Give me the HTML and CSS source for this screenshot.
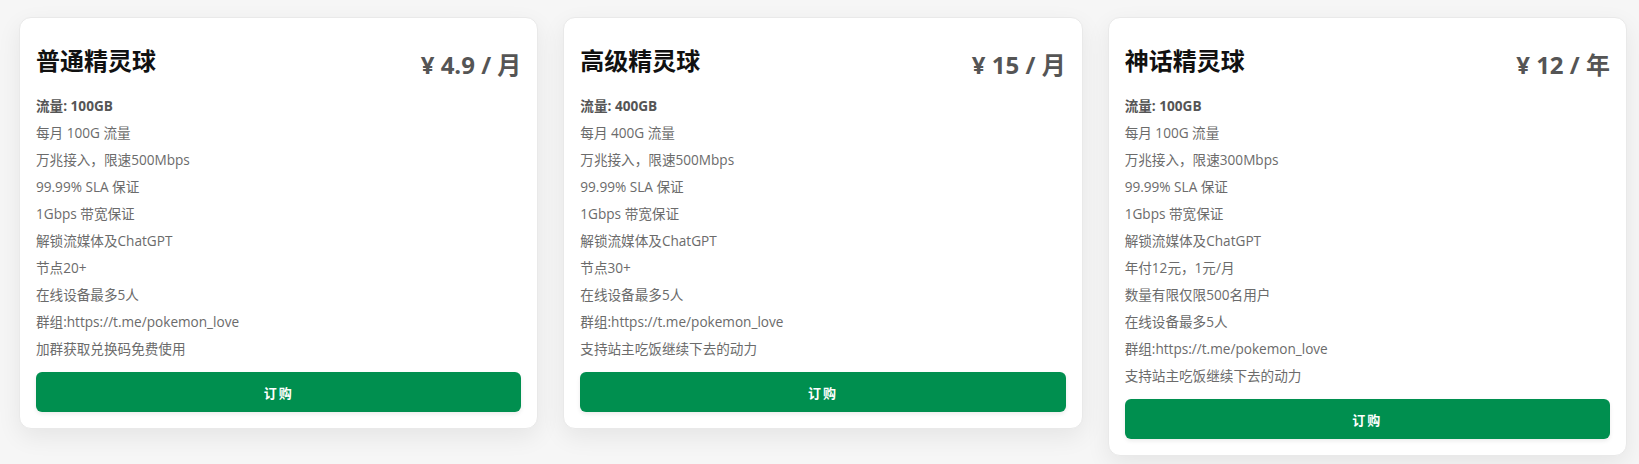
FILE: index.html
```html
<!DOCTYPE html>
<html lang="zh-CN">
<head>
<meta charset="utf-8">
<title>套餐</title>
<link rel="stylesheet" href="styles.css">
</head>
<body>
<div class="plans">
  <div class="card">
    <div class="card-head">
      <h3 class="plan-name">普通精灵球</h3>
      <div class="plan-price">¥ 4.9 / 月</div>
    </div>
    <ul class="features">
      <li class="strong">流量: 100GB</li>
      <li>每月 100G 流量</li>
      <li>万兆接入，限速500Mbps</li>
      <li>99.99% SLA 保证</li>
      <li>1Gbps 带宽保证</li>
      <li>解锁流媒体及ChatGPT</li>
      <li>节点20+</li>
      <li>在线设备最多5人</li>
      <li>群组:https://t.me/pokemon_love</li>
      <li>加群获取兑换码免费使用</li>
    </ul>
    <button class="buy">订购</button>
  </div>
  <div class="card">
    <div class="card-head">
      <h3 class="plan-name">高级精灵球</h3>
      <div class="plan-price">¥ 15 / 月</div>
    </div>
    <ul class="features">
      <li class="strong">流量: 400GB</li>
      <li>每月 400G 流量</li>
      <li>万兆接入，限速500Mbps</li>
      <li>99.99% SLA 保证</li>
      <li>1Gbps 带宽保证</li>
      <li>解锁流媒体及ChatGPT</li>
      <li>节点30+</li>
      <li>在线设备最多5人</li>
      <li>群组:https://t.me/pokemon_love</li>
      <li>支持站主吃饭继续下去的动力</li>
    </ul>
    <button class="buy">订购</button>
  </div>
  <div class="card">
    <div class="card-head">
      <h3 class="plan-name">神话精灵球</h3>
      <div class="plan-price">¥ 12 / 年</div>
    </div>
    <ul class="features">
      <li class="strong">流量: 100GB</li>
      <li>每月 100G 流量</li>
      <li>万兆接入，限速300Mbps</li>
      <li>99.99% SLA 保证</li>
      <li>1Gbps 带宽保证</li>
      <li>解锁流媒体及ChatGPT</li>
      <li>年付12元，1元/月</li>
      <li>数量有限仅限500名用户</li>
      <li>在线设备最多5人</li>
      <li>群组:https://t.me/pokemon_love</li>
      <li>支持站主吃饭继续下去的动力</li>
    </ul>
    <button class="buy">订购</button>
  </div>
</div>
</body>
</html>
```

FILE: styles.css
```css
* { box-sizing: border-box; }
html, body { margin: 0; padding: 0; }
body {
  background: #f6f6f6;
  font-family: "Open Sans", "Noto Sans CJK SC", sans-serif;
  color: #666;
  width: 1639px;
  height: 464px;
  overflow: hidden;
}
.plans {
  display: grid;
  grid-template-columns: repeat(3, 1fr);
  gap: 25px;
  align-items: start;
  padding: 17px 12px 0 19px;
}
.card {
  background: #fff;
  border: 1px solid #e9e9e9;
  border-radius: 12px;
  padding: 24px 16px 16px;
  box-shadow: 0 8px 24px rgba(0, 0, 0, 0.07);
}
.card-head {
  display: flex;
  justify-content: space-between;
  align-items: flex-start;
  height: 36px;
}
.plan-name {
  margin: 0;
  font-family: "Noto Sans CJK SC", sans-serif;
  font-size: 24px;
  font-weight: 700;
  line-height: 36px;
  color: #111;
}
.plan-price {
  margin-top: 4px;
  font-family: "Open Sans", "Noto Sans CJK SC", sans-serif;
  font-size: 24px;
  font-weight: 700;
  line-height: 38px;
  color: #555;
}
.features {
  list-style: none;
  margin: 14px 0 0;
  padding: 0;
}
.features li {
  font-size: 13.6px;
  line-height: 27px;
  color: #6b6b6b;
  white-space: nowrap;
}
.features li.strong {
  font-weight: 700;
  color: #555;
}
.buy {
  display: block;
  width: 100%;
  height: 40px;
  margin-top: 10px;
  border: 0;
  border-radius: 6px;
  background: #008f4f;
  color: #fff;
  font-family: "Noto Sans CJK SC", sans-serif;
  font-size: 13px;
  font-weight: 700;
  letter-spacing: 2px;
  box-shadow: 0 2px 4px rgba(0, 0, 0, 0.08);
}
```
